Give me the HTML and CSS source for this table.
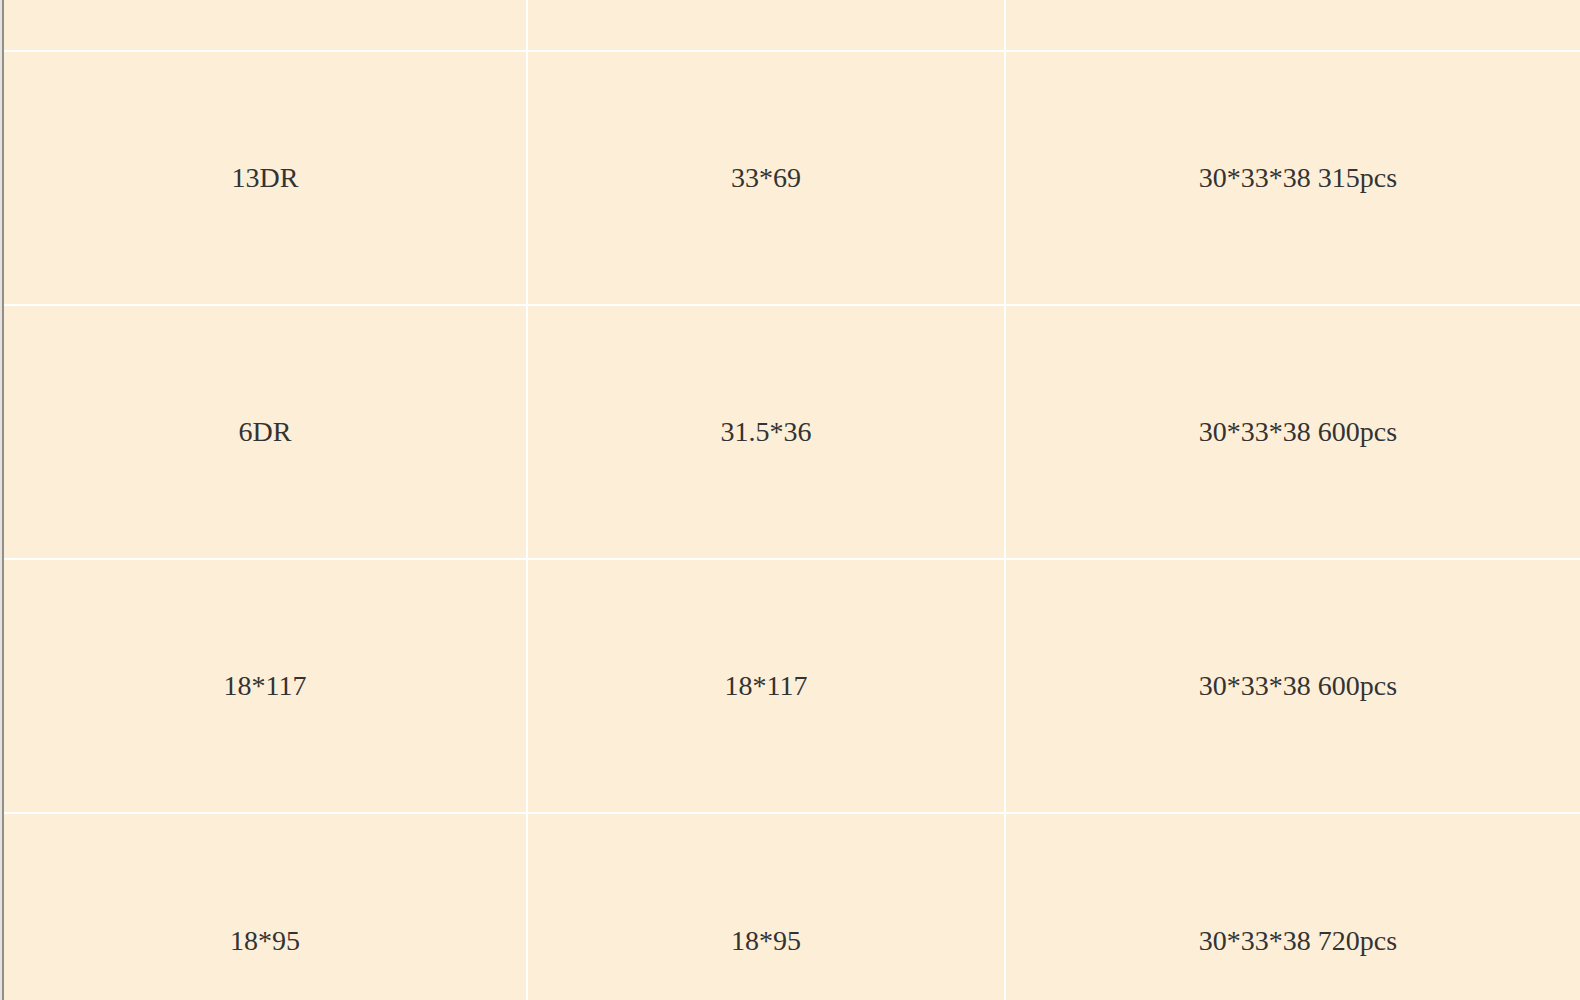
FILE: index.html
```html
<!DOCTYPE html>
<html>
<head>
<meta charset="utf-8">
<link rel="stylesheet" href="styles.css">
</head>
<body>
<div class="wrap">
<table class="spec">
<colgroup><col class="c1"><col class="c2"><col class="c3"></colgroup>
<tbody>
<tr class="partial"><td></td><td></td><td></td></tr>
<tr><td>13DR</td><td>33*69</td><td>30*33*38 315pcs</td></tr>
<tr><td>6DR</td><td>31.5*36</td><td>30*33*38 600pcs</td></tr>
<tr><td>18*117</td><td>18*117</td><td>30*33*38 600pcs</td></tr>
<tr class="last"><td>18*95</td><td>18*95</td><td>30*33*38 720pcs</td></tr>
</tbody>
</table>
</div>
</body>
</html>
```
FILE: styles.css
```css
html { overflow: hidden; }
body {
  margin: 0;
  background: #fdeed8;
  font-family: "Liberation Serif", "Times New Roman", serif;
}
.wrap {
  padding-left: 2px;
  background: #e6e2dc;
  width: max-content;
}
.spec {
  border-collapse: separate;
  border-spacing: 0;
  border-left: 2px solid #8f8f8f;
  table-layout: fixed;
  width: 1588px;
  background: #fdeed8;
}
.c1 { width: 524px; }
.c2 { width: 478px; }
.c3 { width: 586px; }
.spec td {
  height: 252px;
  padding: 0;
  text-align: center;
  vertical-align: middle;
  font-size: 28px;
  color: #333;
  border-bottom: 2px solid #ffffff;
  border-right: 2px solid #ffffff;
  background: #fdeed8;
}
.spec tr.partial td { height: 50px; }
.spec tr.last td { height: 254px; }
```
